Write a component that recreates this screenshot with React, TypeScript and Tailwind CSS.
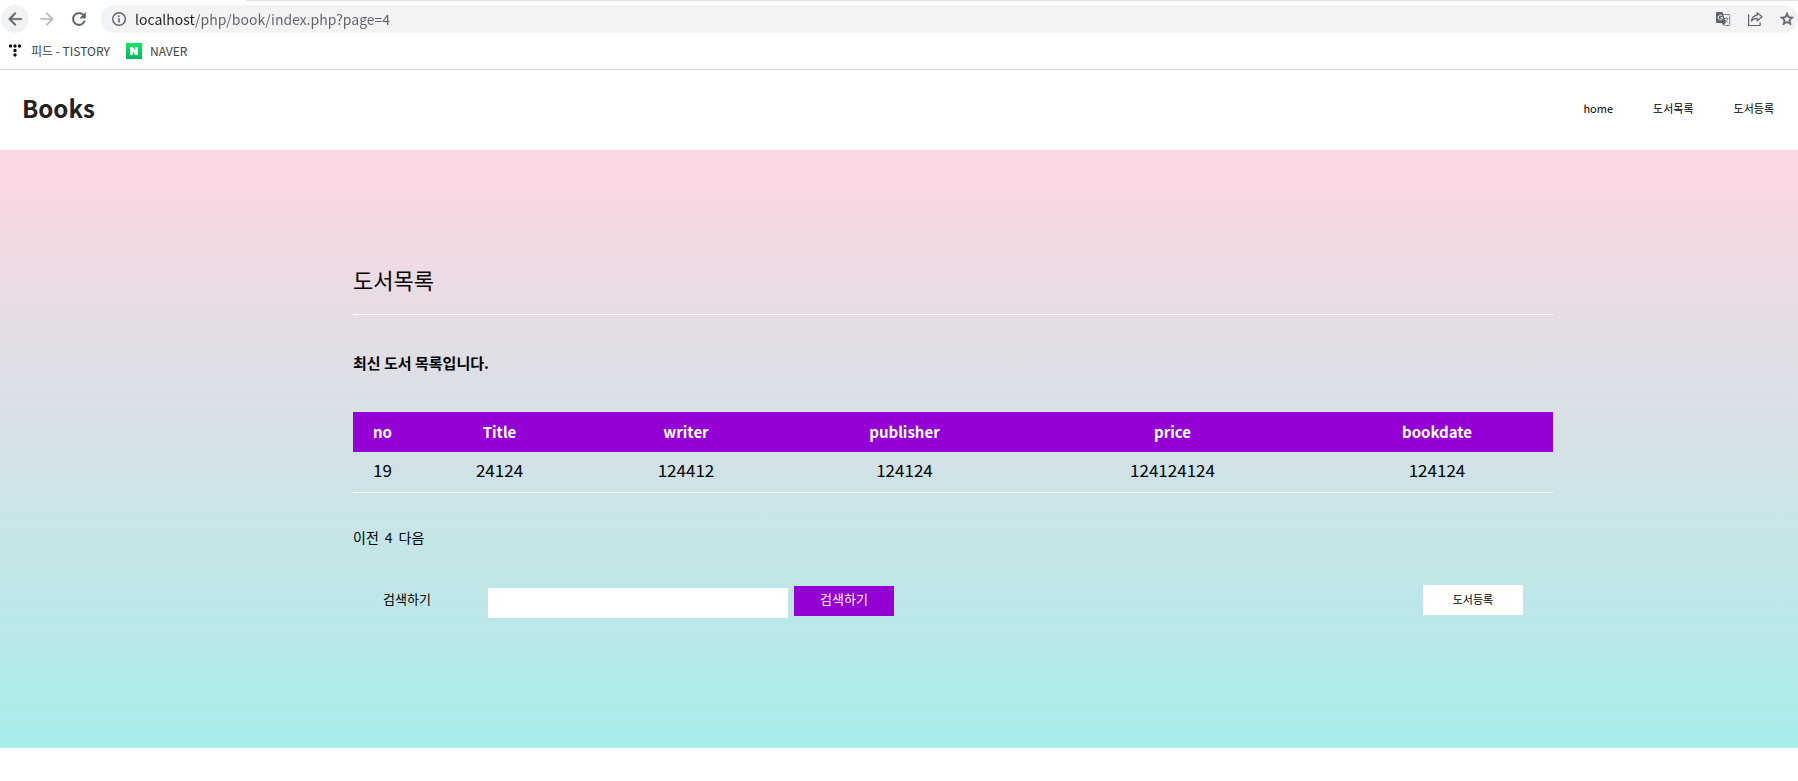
import React from "react";

const columns = [
  { key: "no", width: "w-[59px]" },
  { key: "Title", width: "w-[175px]" },
  { key: "writer", width: "w-[198px]" },
  { key: "publisher", width: "w-[239px]" },
  { key: "price", width: "w-[297px]" },
  { key: "bookdate", width: "w-[232px]" },
];

const rows = [["19", "24124", "124412", "124124", "124124124", "124124"]];

function BackIcon() {
  return (
    <svg viewBox="0 0 24 24" className="size-5" fill="currentColor" stroke="currentColor" strokeWidth=".4" aria-hidden="true">
      <path d="M20 11H7.83l5.59-5.59L12 4l-8 8 8 8 1.41-1.41L7.83 13H20v-2z" />
    </svg>
  );
}

function ForwardIcon() {
  return (
    <svg viewBox="0 0 24 24" className="size-5" fill="currentColor" stroke="currentColor" strokeWidth=".4" aria-hidden="true">
      <path d="M12 4l-1.41 1.41L16.17 11H4v2h12.17l-5.58 5.59L12 20l8-8z" />
    </svg>
  );
}

function ReloadIcon() {
  return (
    <svg viewBox="0 0 24 24" className="size-5" fill="currentColor" stroke="currentColor" strokeWidth=".4" aria-hidden="true">
      <path d="M17.65 6.35C16.2 4.9 14.21 4 12 4c-4.42 0-7.99 3.58-7.99 8s3.57 8 7.99 8c3.73 0 6.84-2.55 7.73-6h-2.08c-.82 2.33-3.04 4-5.65 4-3.31 0-6-2.69-6-6s2.69-6 6-6c1.66 0 3.14.69 4.22 1.78L13 11h7V4l-2.35 2.35z" />
    </svg>
  );
}

function InfoIcon() {
  return (
    <svg viewBox="0 0 16 16" className="size-4 shrink-0 text-[#5f6368]" fill="none" stroke="currentColor" aria-hidden="true">
      <circle cx="8" cy="8" r="6.300" strokeWidth="1.400" />
      <path d="M8 7.200v4.300M8 4.400v1.600" strokeWidth="1.600" />
    </svg>
  );
}

function TranslateIcon() {
  return (
    <svg viewBox="0 0 16 16" className="size-4" aria-hidden="true">
      <path d="M7.500 3.500h6.500a.7.7 0 0 1 .7.7v9.600a.7.7 0 0 1-.7.7H9.500" fill="none" stroke="#80868b" />
      <path d="M9 7.500h4.500M11.300 6v1.500M12.800 7.500c-.3 1.800-1.500 3-2.800 4M10.200 8.800c.6 1.200 1.600 2.200 3 2.900" fill="none" stroke="#80868b" strokeWidth=".9" />
      <path d="M2 1h5.500l3.300 11H2a1 1 0 0 1-1-1V2a1 1 0 0 1 1-1z" fill="#5f6368" />
      <path d="M7.300 12h3.300l-2.400 2.800z" fill="#5f6368" />
      <path d="M7.200 5A2.300 2.300 0 1 0 7.700 6.700H5.500" fill="none" stroke="#fff" />
    </svg>
  );
}

function ShareIcon() {
  return (
    <svg viewBox="0 0 16 16" className="size-4" fill="none" stroke="#5f6368" strokeWidth="1.200" aria-hidden="true">
      <path d="M1.600 3.500v11h11.500v-3.300" />
      <path d="M10.200 1.800l4.800 4-4.800 4V7.400c-2.700 0-4.400.8-5.800 2.700.4-3.200 2.200-5.300 5.800-5.900z" strokeLinejoin="round" />
    </svg>
  );
}

function StarIcon() {
  return (
    <svg viewBox="0 0 24 24" className="size-4" fill="currentColor" aria-hidden="true">
      <path d="M22 9.240l-7.190-.62L12 2 9.190 8.630 2 9.240l5.460 4.730L5.820 21 12 17.270 18.180 21l-1.630-7.030L22 9.240zM12 15.400l-3.760 2.270 1-4.280-3.320-2.880 4.380-.38L12 6.100l1.710 4.040 4.380.38-3.320 2.880 1 4.280L12 15.400z" stroke="currentColor" />
    </svg>
  );
}

function TistoryIcon() {
  return (
    <svg viewBox="0 0 16 16" className="size-4" fill="#111" aria-hidden="true">
      <circle cx="3.500" cy="3" r="1.700" />
      <circle cx="8" cy="3" r="1.700" />
      <circle cx="12.500" cy="3" r="1.700" />
      <circle cx="8" cy="7.500" r="1.700" />
      <circle cx="8" cy="12" r="1.700" />
    </svg>
  );
}

function NaverIcon() {
  return (
    <svg viewBox="0 0 16 16" className="size-4" aria-hidden="true">
      <defs>
        <linearGradient id="naver" x1="0" y1="0" x2="0" y2="1">
          <stop offset="0" stopColor="#04e864" />
          <stop offset="1" stopColor="#04b85f" />
        </linearGradient>
      </defs>
      <rect width="16" height="16" fill="url(#naver)" />
      <path d="M4 4h3l2.200 3.500V4H12v8H9.200L6.800 8.500V12H4z" fill="#fff" />
    </svg>
  );
}

function BrowserBar() {
  return (
    <div className="border-b border-[#dadce0] bg-white">
      <div className="ml-[246px] h-px bg-[#dee1e6]" />
      <div className="flex items-center pt-1 pl-px">
        <button type="button" aria-label="Back" className="flex size-7 items-center justify-center rounded-full bg-[#f2f2f2] text-[#5f6368]">
          <BackIcon />
        </button>
        <button type="button" aria-label="Forward" className="ml-1 flex size-7 items-center justify-center text-[#babcbe]">
          <ForwardIcon />
        </button>
        <button type="button" aria-label="Reload" className="ml-1 flex size-7 items-center justify-center text-[#5f6368]">
          <ReloadIcon />
        </button>
        <div className="ml-2 flex h-7 flex-1 items-center rounded-full bg-[#f1f3f4] pr-[3px] pl-[10px] text-[#5f6368]">
          <InfoIcon />
          <input
            type="text"
            aria-label="Address"
            defaultValue="localhost/php/book/index.php?page=4"
            className="ml-2 h-7 flex-1 bg-linear-to-r from-[#202124] from-[60px] to-[#5f6368] to-[60px] bg-clip-text text-sm text-transparent outline-none"
          />
          <div className="flex gap-4">
            <button type="button" aria-label="Translate"><TranslateIcon /></button>
            <button type="button" aria-label="Share"><ShareIcon /></button>
            <button type="button" aria-label="Bookmark"><StarIcon /></button>
          </div>
        </div>
      </div>
      <div className="flex h-9 items-center gap-4 pl-[7px] text-xs text-[#3c4043]">
        <a href="#tistory" className="flex items-center gap-2"><TistoryIcon />피드 - TISTORY</a>
        <a href="#naver" className="flex items-center gap-2"><NaverIcon />NAVER</a>
      </div>
    </div>
  );
}

export default function App() {
  return (
    <div className="min-h-screen bg-white font-['Noto_Sans_CJK_KR',sans-serif] text-black">
      <BrowserBar />
      <header className="flex h-20 items-center justify-between pr-6 pb-1 pl-[22px]">
        <a href="#books" className="text-2xl font-bold text-[#222]">Books</a>
        <nav className="flex gap-10 text-[11px] leading-4">
          <a href="#home">home</a>
          <a href="#list">도서목록</a>
          <a href="#register">도서등록</a>
        </nav>
      </header>
      <main className="flex justify-center bg-linear-to-b/srgb from-[#fed6e3] to-[#a8edea] pt-[110px] pb-[130px] pl-[108px]">
        <section className="w-full max-w-[1200px]">
          <h1 className="border-b border-white pb-[15px] text-[22px] leading-[39px]">도서목록</h1>
          <h2 className="mt-9 text-[15px] leading-6 font-bold">최신 도서 목록입니다.</h2>
          <table className="mt-[37px] w-full table-fixed border-collapse text-center">
            <thead>
              <tr className="h-10 bg-[#9400d3] text-white">
                {columns.map((c) => (
                  <th key={c.key} scope="col" className={`${c.width} p-0 text-[15px] leading-5 font-bold`}>{c.key}</th>
                ))}
              </tr>
            </thead>
            <tbody>
              {rows.map((row) => (
                <tr key={row[0]} className="h-10 border-b border-white">
                  {row.map((cell, i) => (
                    <td key={i} className="p-0 pb-1 text-[17px] leading-5">{cell}</td>
                  ))}
                </tr>
              ))}
            </tbody>
          </table>
          <nav className="mt-8 flex gap-[6px] text-sm leading-6">
            <a href="#prev">이전</a>
            <a href="#page-4">4</a>
            <a href="#next">다음</a>
          </nav>
          <div className="mt-9 flex items-start justify-between px-[30px]">
            <form className="flex items-start" onSubmit={(e) => e.preventDefault()}>
              <label htmlFor="search" className="w-[105px] text-[13px] leading-7">검색하기</label>
              <input id="search" type="text" className="mt-[3px] h-[30px] w-[300px] bg-white px-2 outline-none" />
              <button type="submit" className="mt-px ml-[6px] h-[30px] w-[100px] bg-[#9400d3] pb-1 text-[13px] text-white">검색하기</button>
            </form>
            <a href="#register" className="h-[30px] w-[100px] bg-white text-center text-[11px] leading-7">도서등록</a>
          </div>
        </section>
      </main>
    </div>
  );
}
